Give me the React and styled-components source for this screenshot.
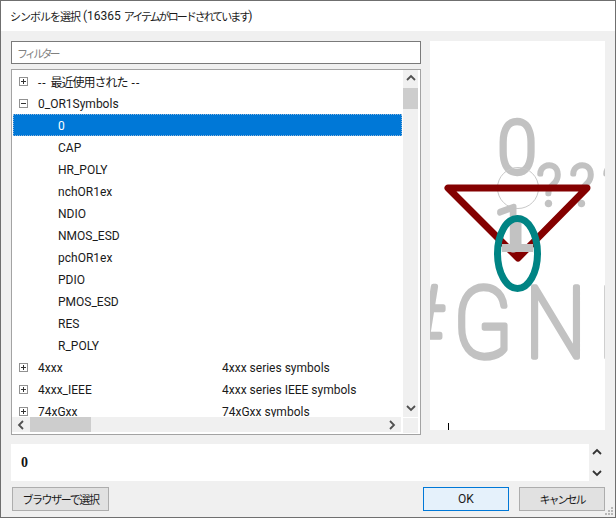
import React from 'react';
import styled, {createGlobalStyle} from 'styled-components';

const Global = createGlobalStyle`
html, body {
    margin: 0;
    padding: 0;
    background: #f0f0f0;
}
`;

const Window = styled.div`
    box-sizing: border-box;
    position: relative;
    width: 616px;
    height: 518px;
    border: 1px solid #6f6f6f;
    background: #f0f0f0;
    font-family: Roboto, "Noto Sans CJK JP", sans-serif;
    font-size: 12px;
    color: #1a1a1a;
    overflow: hidden;
`;

const Jp = styled.span`
    font-family: "Noto Sans CJK JP", sans-serif;
    font-size: ${props => props.$size || 11}px;
    letter-spacing: ${props => props.$spacing}px;
`;

const Dashes = styled.span`
    letter-spacing: 1px;
`;

const TitleBar = styled.div`
    height: 30px;
    background: #fff;
    display: flex;
    align-items: center;
    padding-left: 9px;
    white-space: pre;
`;

const Main = styled.div`
    display: grid;
    grid-template-columns: 410px 175px;
    column-gap: 9px;
    align-items: start;
    padding: 10px 10px 0;
`;

const LeftColumn = styled.div`
    display: flex;
    flex-direction: column;
    gap: 5px;
`;

const FilterInput = styled.div`
    box-sizing: border-box;
    height: 23px;
    border: 1px solid #7a7a7a;
    background: #fff;
    color: #808080;
    display: flex;
    align-items: center;
    padding-left: 5px;
`;

const ListBox = styled.div`
    box-sizing: border-box;
    height: 366px;
    border: 1px solid #a3a3a3;
    background: #fff;
    display: grid;
    grid-template-columns: 391px 17px;
    grid-template-rows: 347px 17px;
`;

const Tree = styled.div`
    overflow: hidden;
    padding: 0 1px;
`;

const Row = styled.div`
    box-sizing: border-box;
    height: 22px;
    padding-top: 1px;
    display: flex;
    align-items: center;
    white-space: pre;
    background: ${props => (props.$selected ? '#0078d7' : 'transparent')};
    color: ${props => (props.$selected ? '#fff' : 'inherit')};
    outline: ${props => (props.$selected ? '1px dotted #8fb4d8' : 'none')};
    outline-offset: -1px;
`;

const Expander = styled.svg`
    width: 9px;
    height: 9px;
    margin: -1px 10px 0 6px;
    flex: none;
`;

const Name = styled.span`
    width: ${props => (props.$child ? '164px' : '184px')};
    margin-left: ${props => (props.$child ? '45px' : '0')};
    flex: none;
`;

const VScroll = styled.div`
    background: #f0f0f0;
    display: flex;
    flex-direction: column;
    width: 15px;
`;

const ScrollEnd = styled.div`
    height: 18px;
    display: flex;
    align-items: center;
    justify-content: center;
    flex: none;
`;

const VThumb = styled.div`
    height: 21px;
    background: #cdcdcd;
`;

const VTrack = styled.div`
    flex: 1;
`;

const HScroll = styled.div`
    background: #f0f0f0;
    display: flex;
    align-items: center;
    height: 15px;
    margin-right: 2px;
`;

const HEnd = styled.div`
    width: 18px;
    height: 100%;
    display: flex;
    align-items: center;
    justify-content: center;
    flex: none;
`;

const HThumb = styled.div`
    width: 61px;
    height: 100%;
    background: #cdcdcd;
`;

const HTrack = styled.div`
    flex: 1;
`;

const Corner = styled.div`
    background: #f0f0f0;
    width: 15px;
    height: 15px;
    margin-top: 1px;
`;

const Preview = styled.div`
    height: 389px;
    background: #fff;
`;

const PreviewArt = styled.svg`
    display: block;
    width: 175px;
    height: 389px;
`;

const StrokeText = styled.text`
    font-family: Roboto, sans-serif;
    font-weight: 100;
    fill: #c2c2c2;
    stroke: #c2c2c2;
    stroke-linejoin: round;
    stroke-linecap: round;
    stroke-width: ${props => props.$weight}px;
`;

const DetailRow = styled.div`
    display: flex;
    margin: 9px 10px 0;
    height: 37px;
`;

const Detail = styled.div`
    width: 578px;
    background: #fff;
    display: flex;
    align-items: center;
    padding-left: 10px;
    box-sizing: border-box;
    font-family: "Liberation Serif", serif;
    font-weight: bold;
    font-size: 14px;
    color: #111;
`;

const Spin = styled.div`
    width: 16px;
    display: flex;
    flex-direction: column;
    justify-content: space-between;
    align-items: center;
    padding: 4px 0 3px;
`;

const Buttons = styled.div`
    display: flex;
    align-items: center;
    margin: 6px 10px 0 11px;
`;

const Button = styled.div`
    box-sizing: border-box;
    width: ${props => props.$width}px;
    height: 24px;
    margin-left: ${props => props.$gap || 0}px;
    display: flex;
    align-items: center;
    justify-content: center;
    background: ${props => (props.$primary ? '#e5f1fb' : '#e1e1e1')};
    border: 1px solid ${props => (props.$primary ? '#0078d7' : '#adadad')};
    white-space: nowrap;
`;

const Spacer = styled.div`
    flex: 1;
`;

const Grip = styled.svg`
    position: absolute;
    right: 0;
    bottom: 0;
    width: 12px;
    height: 12px;
`;

const Chevron = ({dir, color = '#505050'}) => {
  const points = {
    up: '1,6 5,2 9,6',
    down: '1,3 5,7 9,3',
    left: '7,1 3,5 7,9',
    right: '3,1 7,5 3,9',
  }[dir];
  return (
    <svg width="10" height="10" viewBox="0 0 10 10">
      <polyline points={points} fill="none" stroke={color} strokeWidth="1.8" />
    </svg>
  );
};

const Toggle = ({open}) => (
  <Expander viewBox="0 0 9 9">
    <rect x="0.5" y="0.5" width="8" height="8" fill="#fff" stroke="#919191" />
    <path d="M2 4.5H7" stroke="#333" />
    {!open && <path d="M4.5 2V7" stroke="#333" />}
  </Expander>
);

const rows = [
  {name: <><Dashes>-- </Dashes><Jp $size={12} $spacing={-1}>最近使用された</Jp><Dashes> --</Dashes></>, id: 'recent', toggle: true},
  {name: '0_OR1Symbols', toggle: true, open: true},
  {name: '0', selected: true},
  {name: 'CAP'},
  {name: 'HR_POLY'},
  {name: 'nchOR1ex'},
  {name: 'NDIO'},
  {name: 'NMOS_ESD'},
  {name: 'pchOR1ex'},
  {name: 'PDIO'},
  {name: 'PMOS_ESD'},
  {name: 'RES'},
  {name: 'R_POLY'},
  {name: '4xxx', desc: '4xxx series symbols', toggle: true},
  {name: '4xxx_IEEE', desc: '4xxx series IEEE symbols', toggle: true},
  {name: '74xGxx', desc: '74xGxx symbols', toggle: true},
];

const SymbolPreview = () => (
  <PreviewArt viewBox="430 41 175 389">
    <StrokeText $weight={5.5} fontSize="72" transform="translate(498 173) scale(.97 1)">0</StrokeText>
    <StrokeText $weight={4.5} fontSize="55" x="537" y="205">?</StrokeText>
    <StrokeText $weight={4.5} fontSize="55" x="570" y="205">?</StrokeText>
    <StrokeText $weight={4.5} fontSize="55" x="603" y="205">?</StrokeText>
    <circle cx="518" cy="188" r="20.5" fill="none" stroke="#c8c8c8" strokeWidth="1" />
    <polygon points="448,188 587,188 518,258" fill="none" stroke="#840000" strokeWidth="7" strokeLinejoin="round" />
    <polygon points="507,251 529,251 518,261" fill="#840000" />
    <StrokeText $weight={5} fontSize="62" x="494" y="250">1</StrokeText>
    <path d="M517.5 215V249M502 248H533" stroke="#c2c2c2" strokeWidth="8" fill="none" />
    <ellipse cx="517.5" cy="253.5" rx="20" ry="35" fill="none" stroke="#008484" strokeWidth="7" />
    <StrokeText $weight={5.5} fontSize="98" letterSpacing="14" transform="translate(394 357) scale(.88 1)">#GND</StrokeText>
    <path d="M448.5 423V430" stroke="#000" strokeWidth="1" />
  </PreviewArt>
);

const App = () => {
  return (
    <Window>
      <Global />
      <TitleBar>
        <Jp $spacing={-1}>シンボルを選択</Jp> (16365 <Jp $spacing={-2}>アイテムがロードされています</Jp>)
      </TitleBar>
      <Main>
        <LeftColumn>
          <FilterInput><Jp $spacing={-2.8}>フィルター</Jp></FilterInput>
          <ListBox>
            <Tree>
              {rows.map(row => (
                <Row key={row.id || row.name} $selected={row.selected}>
                  {row.toggle && <Toggle open={row.open} />}
                  <Name $child={!row.toggle}>{row.name}</Name>
                  {row.desc && <span>{row.desc}</span>}
                </Row>
              ))}
            </Tree>
            <VScroll>
              <ScrollEnd><Chevron dir="up" /></ScrollEnd>
              <VThumb />
              <VTrack />
              <ScrollEnd><Chevron dir="down" /></ScrollEnd>
            </VScroll>
            <HScroll>
              <HEnd><Chevron dir="left" /></HEnd>
              <HThumb />
              <HTrack />
              <HEnd><Chevron dir="right" /></HEnd>
            </HScroll>
            <Corner />
          </ListBox>
        </LeftColumn>
        <Preview><SymbolPreview /></Preview>
      </Main>
      <DetailRow>
        <Detail>0</Detail>
        <Spin>
          <Chevron dir="up" color="#333" />
          <Chevron dir="down" color="#333" />
        </Spin>
      </DetailRow>
      <Buttons>
        <Button $width={97}><Jp $spacing={-1.4}>ブラウザーで選択</Jp></Button>
        <Spacer />
        <Button $width={86} $primary>OK</Button>
        <Button $width={86} $gap={10}><Jp $spacing={-2}>キャンセル</Jp></Button>
      </Buttons>
      <Grip viewBox="0 0 12 12">
        <g fill="#b8b8b8">
          <rect x="8" y="2" width="2" height="2" />
          <rect x="5" y="5" width="2" height="2" />
          <rect x="8" y="5" width="2" height="2" />
          <rect x="2" y="8" width="2" height="2" />
          <rect x="5" y="8" width="2" height="2" />
          <rect x="8" y="8" width="2" height="2" />
        </g>
      </Grip>
    </Window>
  );
};

export default App;
